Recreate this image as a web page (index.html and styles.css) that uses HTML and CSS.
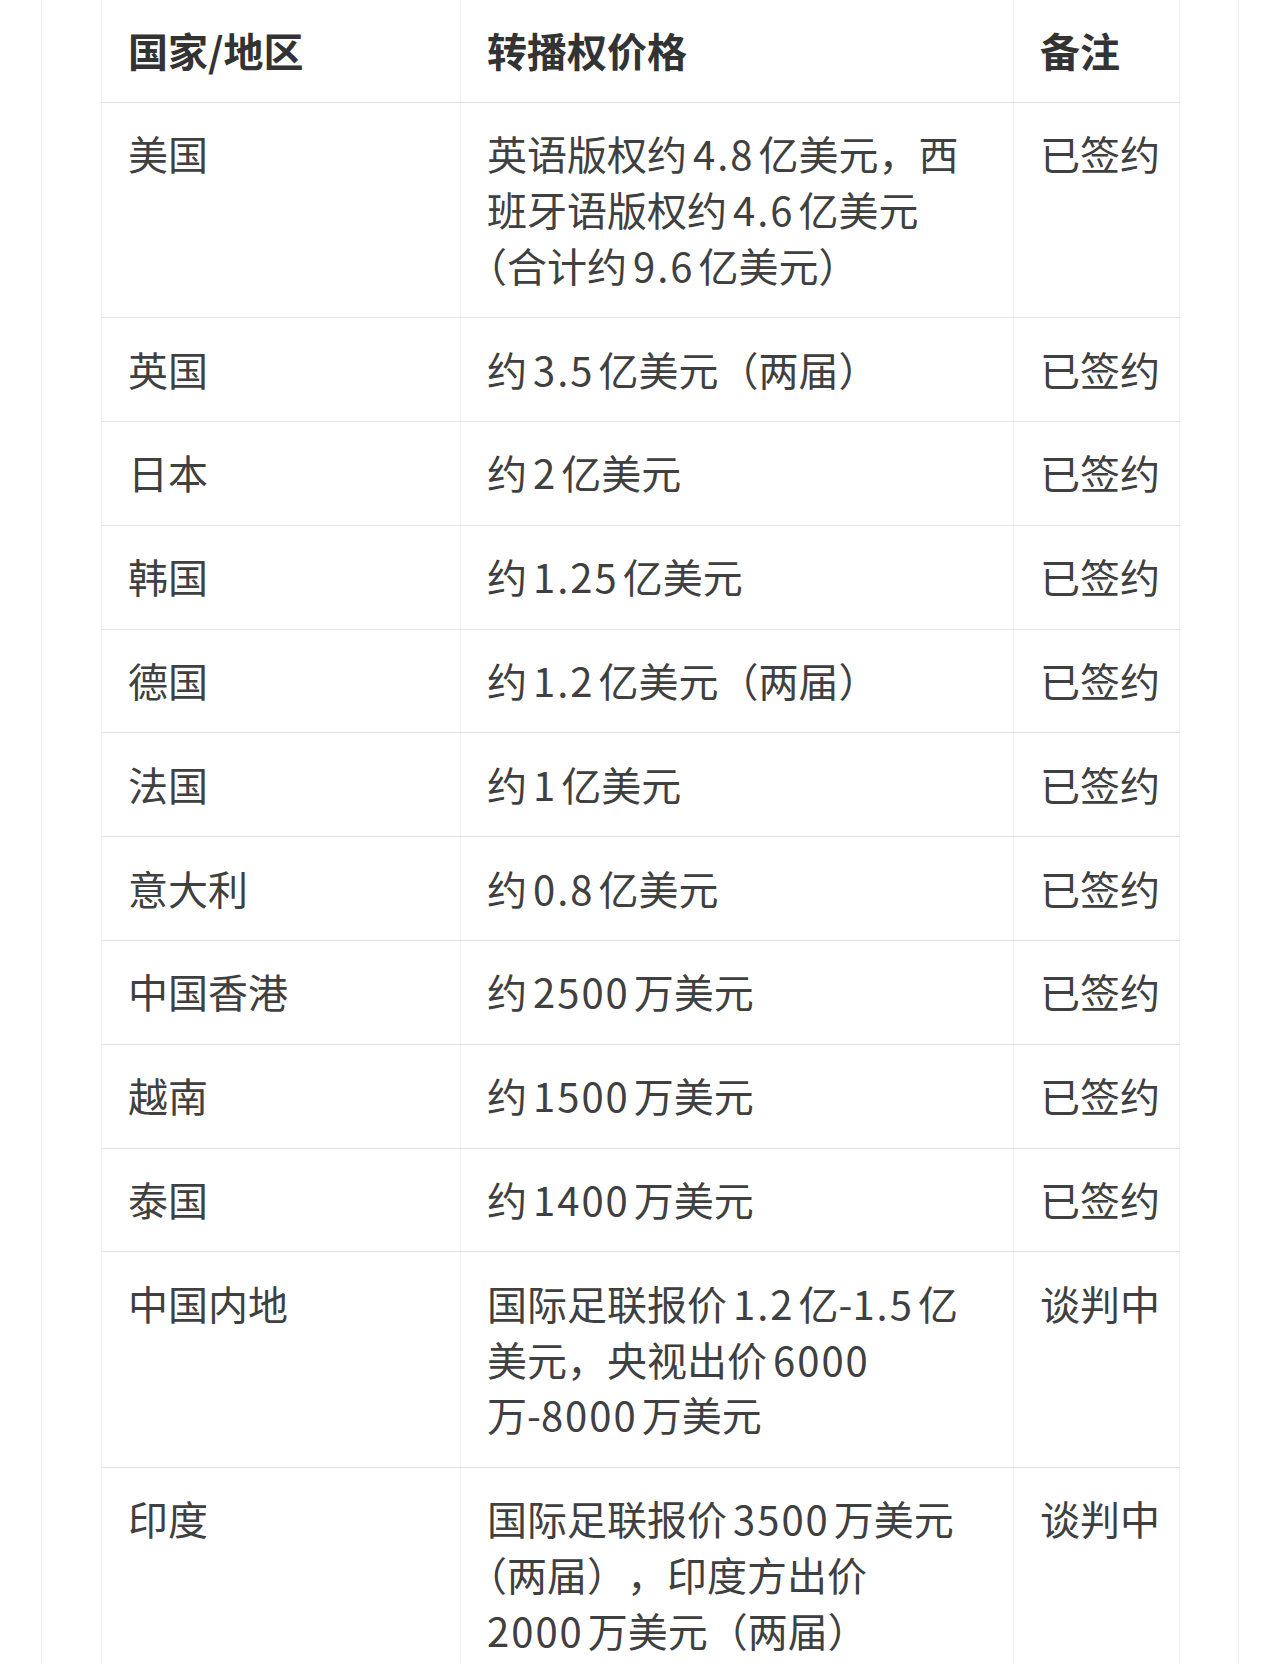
FILE: index.html
```html
<!DOCTYPE html>
<html lang="zh-CN">
<head>
<meta charset="utf-8">
<title>转播权价格</title>
<link rel="stylesheet" href="styles.css">
</head>
<body>
<div class="page">
  <table class="rights">
    <colgroup>
      <col class="col-country">
      <col class="col-price">
      <col class="col-note">
    </colgroup>
    <thead>
      <tr><th>国家/地区</th><th>转播权价格</th><th>备注</th></tr>
    </thead>
    <tbody>
      <tr><td>美国</td><td>英语版权约<span class="n">4.8</span>亿美元，西班牙语版权约<span class="n">4.6</span>亿美元<span class="lead">（</span>合计约<span class="n">9.6</span>亿美元）</td><td>已签约</td></tr>
      <tr><td>英国</td><td>约<span class="n">3.5</span>亿美元（两届）</td><td>已签约</td></tr>
      <tr><td>日本</td><td>约<span class="n">2</span>亿美元</td><td>已签约</td></tr>
      <tr><td>韩国</td><td>约<span class="n">1.25</span>亿美元</td><td>已签约</td></tr>
      <tr><td>德国</td><td>约<span class="n">1.2</span>亿美元（两届）</td><td>已签约</td></tr>
      <tr><td>法国</td><td>约<span class="n">1</span>亿美元</td><td>已签约</td></tr>
      <tr><td>意大利</td><td>约<span class="n">0.8</span>亿美元</td><td>已签约</td></tr>
      <tr><td>中国香港</td><td>约<span class="n">2500</span>万美元</td><td>已签约</td></tr>
      <tr><td>越南</td><td>约<span class="n">1500</span>万美元</td><td>已签约</td></tr>
      <tr><td>泰国</td><td>约<span class="n">1400</span>万美元</td><td>已签约</td></tr>
      <tr><td>中国内地</td><td>国际足联报价<span class="n">1.2</span>亿-<span class="n n-start">1.5</span>亿美元，央视出价<span class="n">6000</span>万-<span class="n n-start">8000</span>万美元</td><td>谈判中</td></tr>
      <tr><td>印度</td><td>国际足联报价<span class="n">3500</span>万美元<span class="lead">（</span>两届），印度方出价<span class="n n-start">2000</span>万美元（两届）</td><td>谈判中</td></tr>
    </tbody>
  </table>
</div>
</body>
</html>
```

FILE: styles.css
```css
html, body {
  margin: 0;
  padding: 0;
  background: #ffffff;
}

body {
  font-family: "Noto Sans CJK SC", "Noto Sans", sans-serif;
  color: #404040;
}

.page {
  box-sizing: border-box;
  margin-left: 41px;
  width: 1198px;
  min-height: 1664px;
  border-left: 1px solid #ececec;
  border-right: 1px solid #f0f0f0;
  overflow: hidden;
}

.rights {
  margin-left: 59px;
  margin-top: -1px;
  width: 1078px;
  table-layout: fixed;
  border-collapse: collapse;
  text-spacing-trim: space-all;
}

.col-country { width: 359px; }
.col-price { width: 553px; }
.col-note { width: 166px; }

.rights th,
.rights td {
  font-size: 40px;
  line-height: 55.8px;
  padding: 23.5px 24px 23.5px 26px;
  text-align: left;
  vertical-align: top;
  border-bottom: 1px solid #e2e2e2;
  border-left: 1px solid #f2f2f2;
  border-right: 1px solid #f2f2f2;
}

.rights td:nth-child(2),
.rights th:nth-child(2) {
  padding-right: 50px;
}

.rights td:nth-child(3),
.rights th:nth-child(3) {
  padding-right: 8px;
  white-space: nowrap;
}

.rights th {
  font-weight: 700;
  color: #333333;
}

.n {
  margin: 0 4px 0 6px;
  letter-spacing: 2px;
}

.n-start {
  margin-left: 0;
}

.lead {
  margin-left: -20px;
}
```
